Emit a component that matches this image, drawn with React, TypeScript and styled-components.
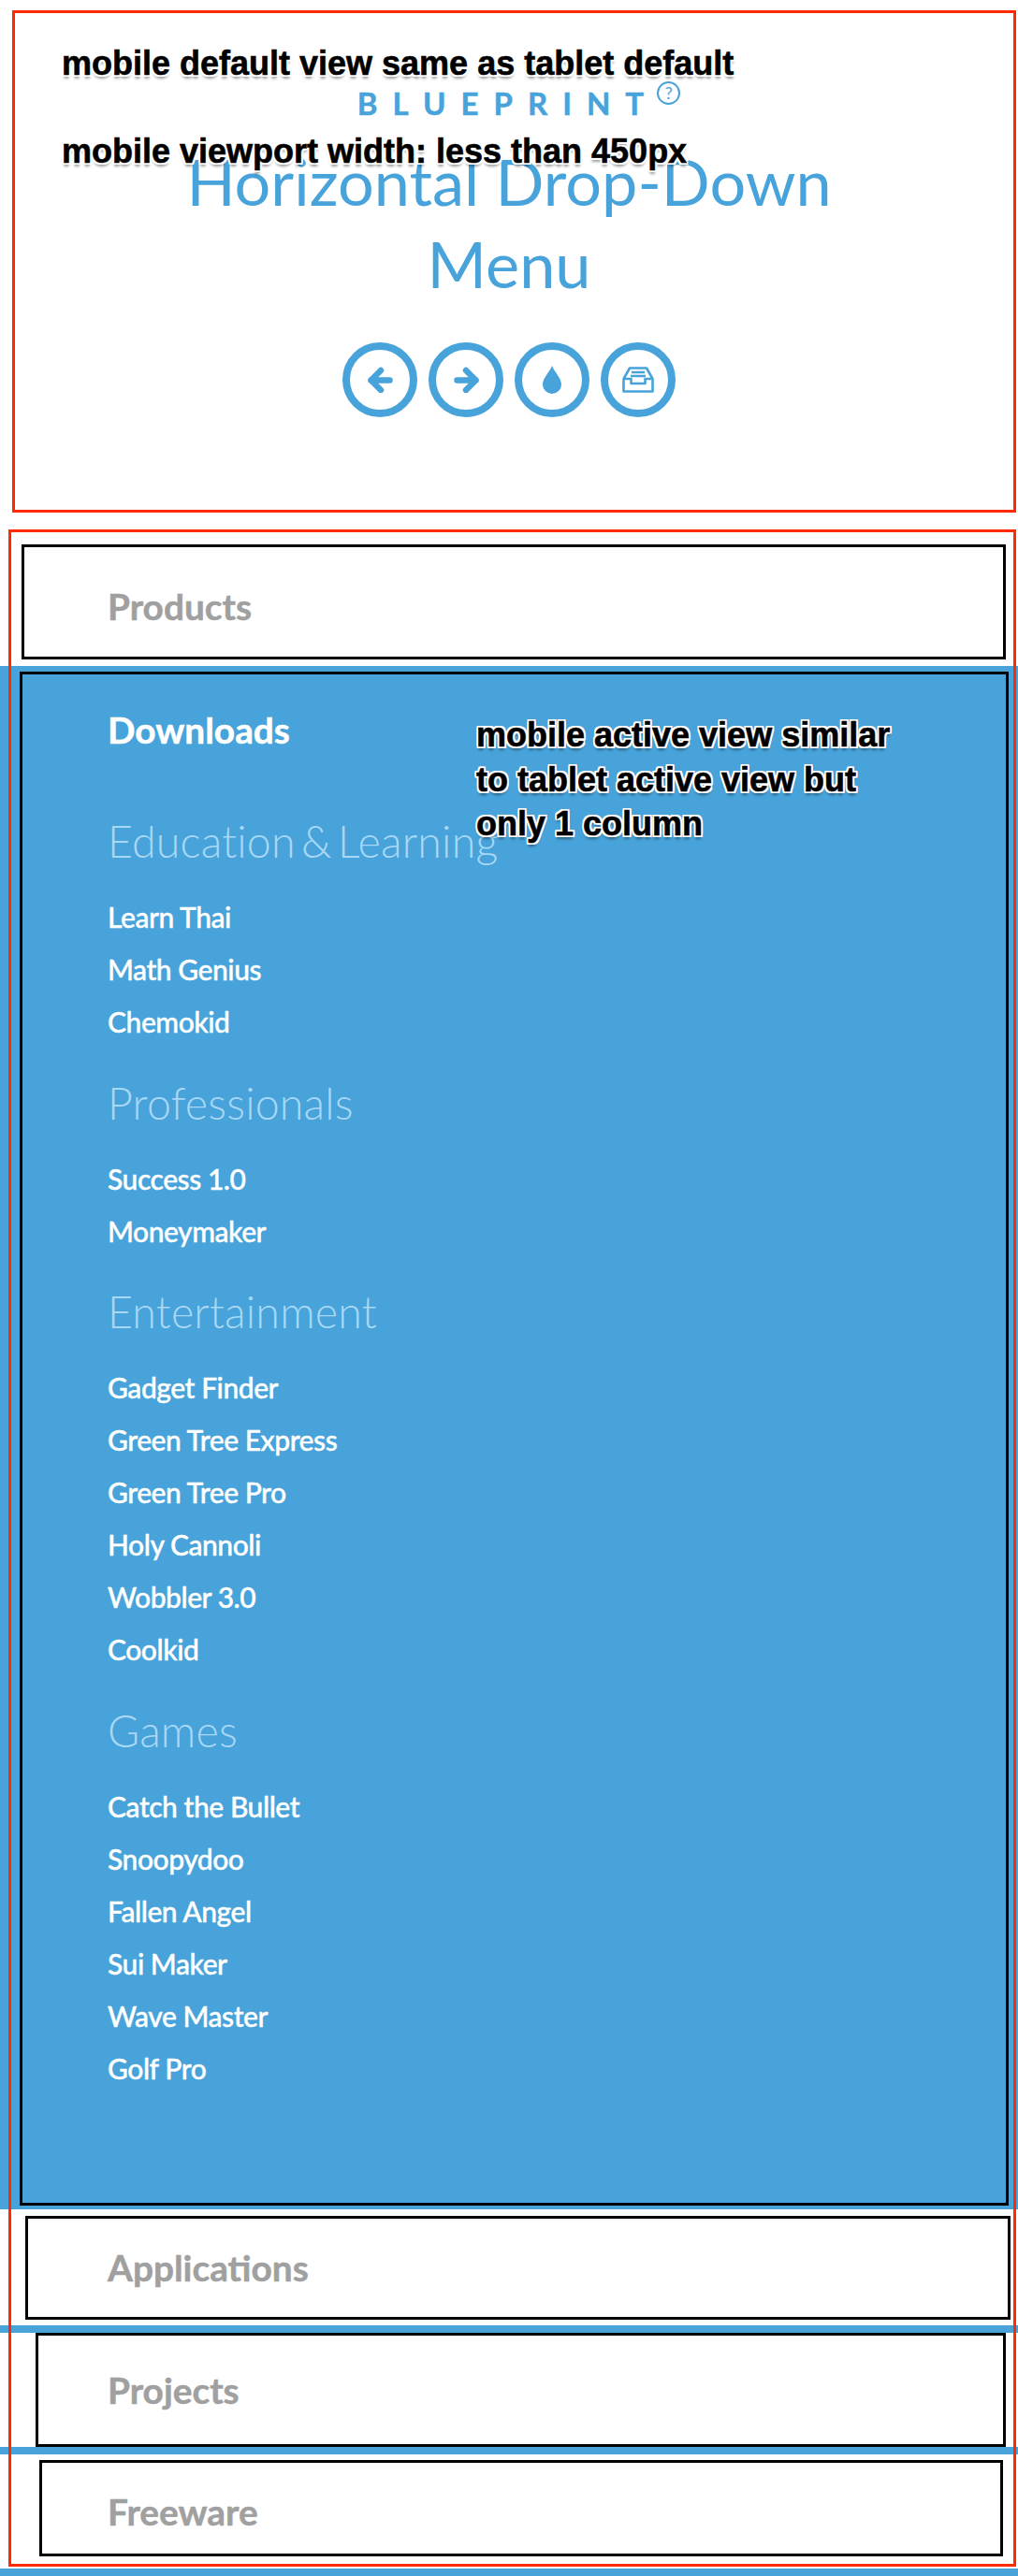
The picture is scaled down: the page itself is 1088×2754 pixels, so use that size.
import React from 'react';
import styled, { createGlobalStyle } from 'styled-components';

const BLUE = '#47a3da';

const GlobalStyle = createGlobalStyle`
  html, body {
    margin: 0;
    padding: 0;
    background: #fff;
  }
  body {
    font-family: Lato, "Open Sans", sans-serif;
  }
`;

const Page = styled.div`
  position: relative;
  width: 1088px;
  height: 2754px;
  overflow: hidden;
`;

const Header = styled.header`
  height: 564px;
  padding-top: 90px;
  box-sizing: border-box;
  text-align: center;
  color: ${BLUE};
`;

const Brand = styled.div`
  display: inline-flex;
  align-items: flex-start;
  margin-left: 21px;
  height: 40px;
`;

const BrandName = styled.span`
  font-size: 33px;
  font-weight: 700;
  letter-spacing: 16px;
  line-height: 40px;
  -webkit-text-stroke: 0.5px ${BLUE};
`;

const BrandMark = styled.span`
  width: 25px;
  height: 25px;
  margin-top: -3px;
  margin-left: -2px;
  box-sizing: border-box;
  border: 2px solid ${BLUE};
  border-radius: 50%;
  font-size: 18px;
  line-height: 21px;
  text-align: center;
`;

const Title = styled.h1`
  margin: 20px 0 0;
  padding: 0 160px;
  font-size: 68.4px;
  font-weight: 400;
  line-height: 88px;
`;

const IconRow = styled.div`
  display: flex;
  justify-content: center;
  gap: 12px;
  margin-top: 40px;
`;

const IconCircle = styled.a`
  display: flex;
  align-items: center;
  justify-content: center;
  width: 80px;
  height: 80px;
  box-sizing: border-box;
  border: 8px solid ${BLUE};
  border-radius: 50%;
  color: ${BLUE};
`;

const Menu = styled.nav`
  display: flex;
  flex-direction: column;
`;

const Row = styled.div<{ $height: number; $strip?: boolean; $pushDown?: number }>`
  position: relative;
  height: ${(p) => p.$height}px;
  box-sizing: border-box;
  display: flex;
  align-items: center;
  padding-left: 115px;
  padding-top: ${(p) => p.$pushDown ?? 0}px;
  border-bottom: ${(p) => (p.$strip ? `8px solid ${BLUE}` : 'none')};
`;

const RowLabel = styled.a<{ $active?: boolean }>`
  font-size: 38.8px;
  font-weight: 700;
  color: ${(p) => (p.$active ? '#fff' : '#a0a0a0')};
  -webkit-text-stroke: 0.5px ${(p) => (p.$active ? '#fff' : '#a0a0a0')};
`;

const Panel = styled.div`
  background: ${BLUE};
  height: 1650px;
  box-sizing: border-box;
  padding: 45px 0 0 115px;
`;

const SectionList = styled.div`
  margin-top: 65px;
`;

const Section = styled.section`
  margin-top: 27.5px;

  &:first-child {
    margin-top: 0;
  }
`;

const SectionTitle = styled.h4`
  margin: 0 0 22px;
  font-size: 46.5px;
  font-weight: 300;
  letter-spacing: 0.2px;
  word-spacing: -6.5px;
  line-height: 62px;
  color: #a8d8f5;
`;

const LinkItem = styled.a`
  display: block;
  height: 56px;
  font-size: 30px;
  font-weight: 500;
  letter-spacing: -0.45px;
  line-height: 56px;
  color: #fff;
  -webkit-text-stroke: 0.4px #fff;
`;

const Outline = styled.div<{ $color: string; $top: number; $left: number; $width: number; $height: number; $weight: number }>`
  position: absolute;
  top: ${(p) => p.$top}px;
  left: ${(p) => p.$left}px;
  width: ${(p) => p.$width}px;
  height: ${(p) => p.$height}px;
  box-sizing: border-box;
  border: ${(p) => p.$weight}px solid ${(p) => p.$color};
  pointer-events: none;
`;

const Note = styled.div<{ $top: number; $left: number }>`
  position: absolute;
  top: ${(p) => p.$top}px;
  left: ${(p) => p.$left}px;
  font-family: "Liberation Sans", Arial, sans-serif;
  font-size: 36px;
  font-weight: 700;
  line-height: 47.5px;
  color: #000;
  white-space: nowrap;
  -webkit-text-stroke: 0.6px #000;
  text-shadow:
    2px 0 0 #fff, -2px 0 0 #fff, 0 2px 0 #fff, 0 -2px 0 #fff,
    2px 2px 0 #fff, -2px 2px 0 #fff, 2px -2px 0 #fff, -2px -2px 0 #fff,
    0 4px 3px rgba(0, 0, 0, 0.4);
`;

const groups = [
  { title: 'Education & Learning', links: ['Learn Thai', 'Math Genius', 'Chemokid'] },
  { title: 'Professionals', links: ['Success 1.0', 'Moneymaker'] },
  { title: 'Entertainment', links: ['Gadget Finder', 'Green Tree Express', 'Green Tree Pro', 'Holy Cannoli', 'Wobbler 3.0', 'Coolkid'] },
  { title: 'Games', links: ['Catch the Bullet', 'Snoopydoo', 'Fallen Angel', 'Sui Maker', 'Wave Master', 'Golf Pro'] },
];

const ArrowIcon = ({ flip }: { flip?: boolean }) => (
  <svg width="27" height="28" viewBox="0 0 27 28" fill="none" stroke="currentColor" strokeWidth="6.5" strokeLinecap="round" strokeLinejoin="round" style={flip ? { transform: 'scaleX(-1)' } : undefined}>
    <path d="M3.5 14.5 H23.5 M14 4 L3.5 14.5 L14 25" />
  </svg>
);

const DropIcon = () => (
  <svg width="20" height="30" viewBox="0 0 20 30" fill="currentColor">
    <path d="M10 0 C12 6 20 13 20 20 A10 10 0 0 1 0 20 C0 13 8 6 10 0 Z" />
  </svg>
);

const InboxIcon = () => (
  <svg width="34" height="28" viewBox="0 0 34 28" fill="none" stroke="currentColor" strokeWidth="2.6" strokeLinejoin="round">
    <path d="M1.5 13 L8 1.5 H26 L32.5 13 V26.5 H1.5 Z" />
    <path d="M1.5 13 H9.5 V18 H24.5 V13 H32.5" />
    <path d="M10 6 H24 M9 10 H25" />
  </svg>
);

const App = () => (
  <Page>
    <GlobalStyle />
    <Header>
      <Brand>
        <BrandName>BLUEPRINT</BrandName>
        <BrandMark>?</BrandMark>
      </Brand>
      <Title>Horizontal Drop-Down Menu</Title>
      <IconRow>
        <IconCircle><ArrowIcon /></IconCircle>
        <IconCircle><ArrowIcon flip /></IconCircle>
        <IconCircle><DropIcon /></IconCircle>
        <IconCircle><InboxIcon /></IconCircle>
      </IconRow>
    </Header>
    <Menu>
      <Row $height={148} $pushDown={20}><RowLabel>Products</RowLabel></Row>
      <Panel>
        <RowLabel $active>Downloads</RowLabel>
        <SectionList>
          {groups.map((g) => (
            <Section key={g.title}>
              <SectionTitle>{g.title}</SectionTitle>
              {g.links.map((l) => (
                <LinkItem key={l}>{l}</LinkItem>
              ))}
            </Section>
          ))}
        </SectionList>
      </Panel>
      <Row $height={132} $strip><RowLabel>Applications</RowLabel></Row>
      <Row $height={130} $strip><RowLabel>Projects</RowLabel></Row>
      <Row $height={130} $strip><RowLabel>Freeware</RowLabel></Row>
    </Menu>

    <Outline $color="#ff2a00" $weight={3} $top={11} $left={13} $width={1073} $height={537} />
    <Outline $color="#ff2a00" $weight={3} $top={566} $left={9} $width={1077} $height={2178} />
    <Outline $color="#000" $weight={3} $top={582} $left={23} $width={1052} $height={123} />
    <Outline $color="#000" $weight={3} $top={718} $left={21} $width={1057} $height={1640} />
    <Outline $color="#000" $weight={3} $top={2369} $left={27} $width={1053} $height={111} />
    <Outline $color="#000" $weight={3} $top={2494} $left={38} $width={1037} $height={122} />
    <Outline $color="#000" $weight={3} $top={2630} $left={42} $width={1030} $height={103} />

    <Note $top={44} $left={66}>mobile default view same as tablet default</Note>
    <Note $top={138} $left={66}>mobile viewport width: less than 450px</Note>
    <Note $top={762} $left={509}>
      mobile active view similar
      <br />
      to tablet active view but
      <br />
      only 1 column
    </Note>
  </Page>
);

export default App;
